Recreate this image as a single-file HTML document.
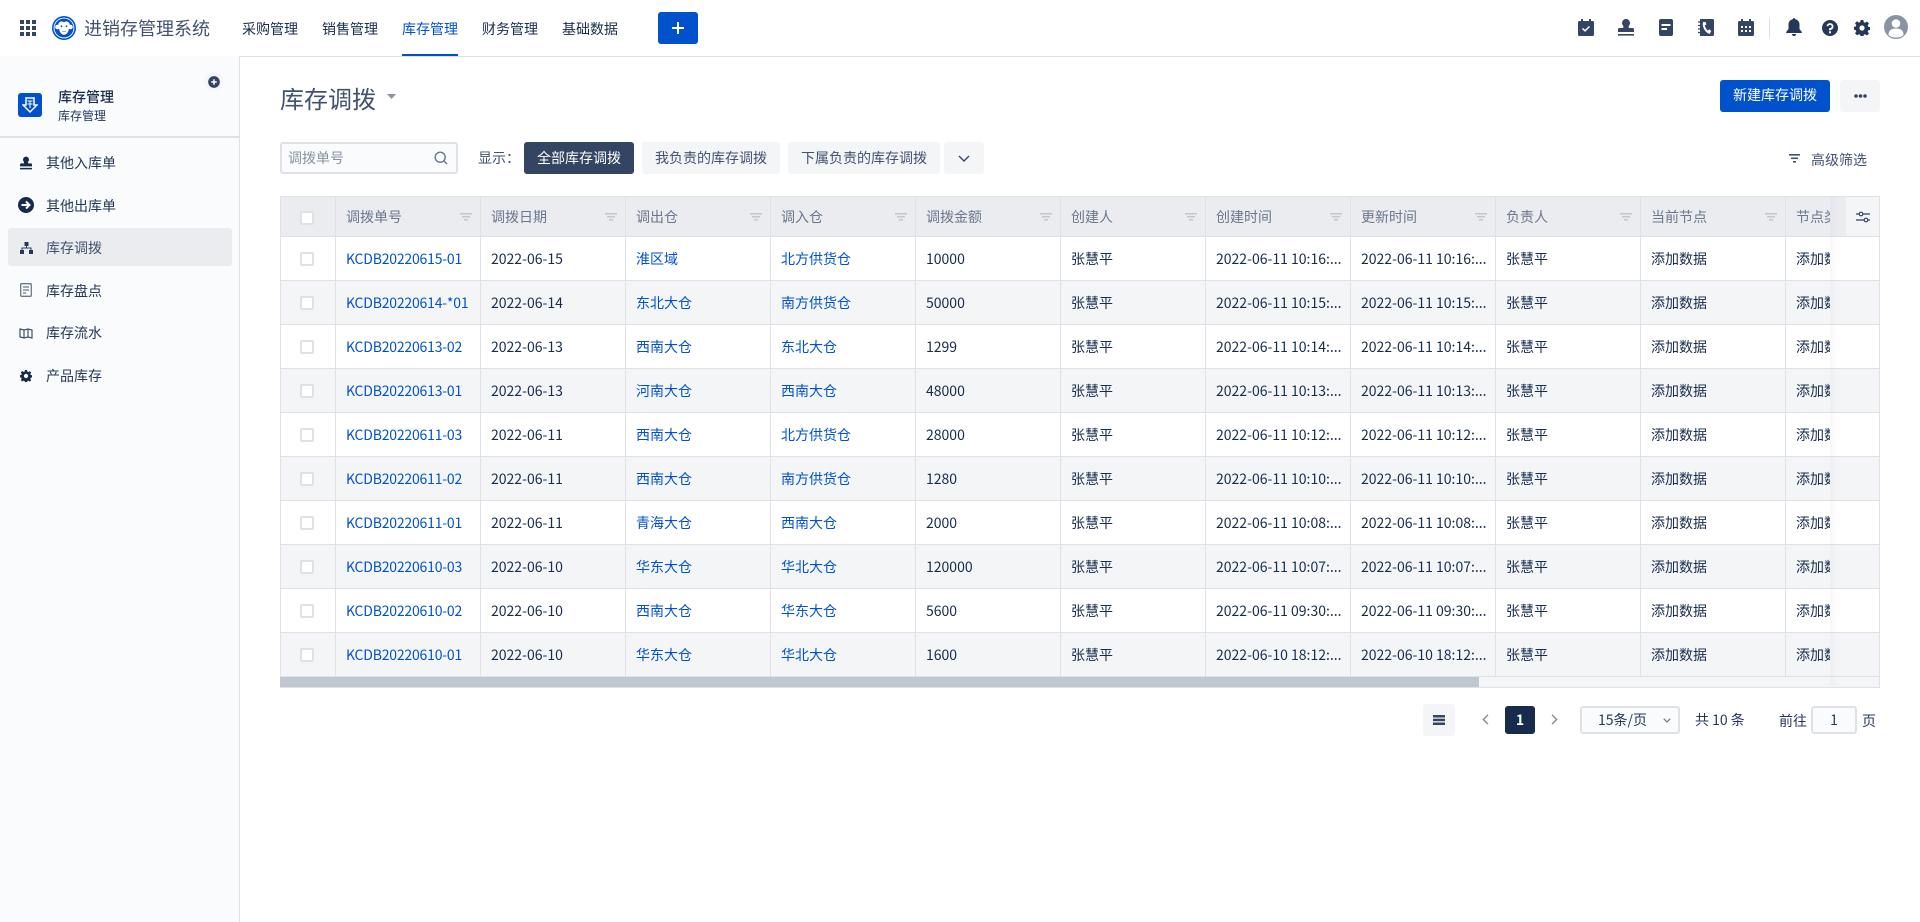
<!DOCTYPE html>
<html lang="zh"><head><meta charset="utf-8"><title>库存调拨</title>
<style>
*{box-sizing:border-box}
html,body{margin:0;padding:0;width:1920px;height:922px;overflow:hidden;background:#fff}
body{font-family:"Noto Sans CJK SC","Liberation Sans",sans-serif;font-size:14px;color:#172b4d;position:relative}
.a{position:absolute;white-space:nowrap}
.t{position:absolute;white-space:nowrap;line-height:20px}
svg{position:absolute;display:block}
.navi{position:absolute;top:19px;line-height:20px;color:#172b4d}
.side{position:absolute;left:0;top:56px;width:240px;height:866px;background:#fafbfc;border-right:1px solid #dfe1e6}
.mi{position:absolute;left:46px;line-height:20px;color:#253858}
.pill{position:absolute;top:142px;height:32px;line-height:33px;text-align:center;border-radius:3px;background:#f4f5f7;color:#42526e}
.tbl{position:absolute;left:280px;top:196px;width:1600px;height:492px;border:1px solid #dfe1e6;border-width:1px 1px 1px 0;border-left:1px solid #dfe1e6;overflow:hidden;background:#f4f5f7}
.r{display:flex;height:44px;background:#fff;border-bottom:1px solid #dfe1e6;width:1600px;margin-left:-1px}
.r.e{background:#f4f5f7}
.r.h{height:40px;background:#ebecf0;color:#6b778c}
.c{width:145px;flex:none;border-left:1px solid #dfe1e6;padding-left:10px;line-height:45px;white-space:nowrap;overflow:hidden;position:relative}
.h .c{line-height:40px}
.c.k{width:55px;padding:0}
.c.l{width:45px}
.c.p{width:50px;border:0}
.k i{position:absolute;left:19px;top:15px;width:14px;height:14px;background:#fff;border:2px solid #dfe1e6;border-radius:2px}
.h .k i{top:14px}
.b{color:#0052cc}
.r:not(.h) .c:nth-child(2){letter-spacing:-.2px}
.f{position:absolute;right:8px;top:16px}
.shade{position:absolute;left:1830px;top:197px;width:8px;height:488px;background:linear-gradient(90deg,rgba(9,30,66,.03),rgba(9,30,66,0))}
.h .f{right:8px}
</style></head><body>

<!-- top bar -->
<div class="a" style="left:0;top:0;width:1920px;height:57px;background:#fff;border-bottom:1px solid #dfe1e6"></div>
<svg style="left:20px;top:20px" width="16" height="16" viewBox="0 0 16 16" fill="#344563"><rect width="4" height="4"/><rect x="6" width="4" height="4"/><rect x="12" width="4" height="4"/><rect y="6" width="4" height="4"/><rect x="6" y="6" width="4" height="4"/><rect x="12" y="6" width="4" height="4"/><rect y="12" width="4" height="4"/><rect x="6" y="12" width="4" height="4"/><rect x="12" y="12" width="4" height="4"/></svg>
<svg style="left:52px;top:16px" width="24" height="24" viewBox="0 0 24 24"><circle cx="12" cy="12" r="12" fill="#0052cc"/><circle cx="12" cy="12" r="10.400" fill="#fff"/><circle cx="12" cy="12" r="9.500" fill="#0052cc"/><circle cx="5.500" cy="11" r="2.300" fill="#fff"/><circle cx="18.500" cy="11" r="2.300" fill="#fff"/><path d="M12 6.300c1.300-1.300 5.300-1.300 5.700 2.200.2 1.900-.9 2.800-.9 4 0 3.200-2.200 6.300-4.800 6.300s-4.800-3.100-4.800-6.300c0-1.200-1.100-2.100-.9-4 .4-3.500 4.400-3.500 5.700-2.200z" fill="#fff"/><circle cx="9.500" cy="10.300" r=".9" fill="#0052cc"/><circle cx="14.500" cy="10.300" r=".9" fill="#0052cc"/><path d="M10 15.500h4" stroke="#7aa5e6" stroke-width=".8"/></svg>
<div class="t" style="left:84px;top:16px;font-size:18px;line-height:24px;color:#42526e">进销存管理系统</div>
<div class="navi" style="left:242px">采购管理</div>
<div class="navi" style="left:322px">销售管理</div>
<div class="navi" style="left:402px;color:#0052cc">库存管理</div>
<div class="navi" style="left:482px">财务管理</div>
<div class="navi" style="left:562px">基础数据</div>
<div class="a" style="left:402px;top:54px;width:56px;height:2px;background:#0052cc"></div>
<div class="a" style="left:658px;top:12px;width:40px;height:32px;background:#0052cc;border-radius:3px"></div>
<svg style="left:671px;top:21px" width="14" height="14" viewBox="0 0 14 14"><path d="M7 1v12M1 7h12" stroke="#fff" stroke-width="2"/></svg>

<!-- right icons -->
<svg style="left:1578px;top:19px" width="16" height="17" viewBox="0 0 16 17"><path d="M3 0h2v2h6V0h2v2h1.500A1.500 1.500 0 0 1 16 3.500v12a1.500 1.500 0 0 1-1.500 1.500h-13A1.500 1.500 0 0 1 0 15.500v-12A1.500 1.500 0 0 1 1.500 2H3z" fill="#344563"/><path d="M4.500 9.500l2.500 2.300 4.500-4.300" fill="none" stroke="#fff" stroke-width="1.500"/></svg>
<svg style="left:1618px;top:19px" width="16" height="17" viewBox="0 0 16 17" fill="#344563"><path d="M8 0a4 4 0 0 1 3 6.600c-.6.800-.5 1.900 0 2.400h3.500A1.500 1.500 0 0 1 16 10.500V13H0v-2.500A1.500 1.500 0 0 1 1.500 9H5c.5-.5.600-1.600 0-2.400A4 4 0 0 1 8 0z"/><rect y="15" width="16" height="1.600"/></svg>
<svg style="left:1659px;top:19px" width="14" height="17" viewBox="0 0 14 17"><rect width="14" height="17" rx="2" fill="#344563"/><path d="M2.500 6h9M2.500 10h5.500" stroke="#fff" stroke-width="2"/></svg>
<svg style="left:1698px;top:19px" width="16" height="17" viewBox="0 0 16 17"><path d="M2 0h12.500A1.500 1.500 0 0 1 16 1.500v14a1.500 1.500 0 0 1-1.500 1.500H2z" fill="#344563"/><path d="M0 3h3M0 6.500h3M0 10h3M0 13.500h3" stroke="#344563" stroke-width="1.200"/><path d="M6.200 3.200c-1.500 3.500 1.500 9.800 6 10.800" fill="none" stroke="#fff" stroke-width="2"/><path d="M5.300 3.500l2.200-.7.900 2.700-2 .8zM9.800 11.500l1.300-1.300 2.200 1.800-1.200 2z" fill="#fff"/></svg>
<svg style="left:1738px;top:19px" width="16" height="17" viewBox="0 0 16 17"><path d="M3 0h2v2h6V0h2v2h1.500A1.500 1.500 0 0 1 16 3.500v12a1.500 1.500 0 0 1-1.500 1.500h-13A1.500 1.500 0 0 1 0 15.500v-12A1.500 1.500 0 0 1 1.500 2H3z" fill="#344563"/><path d="M3 7h2v2H3zM7 7h2v2H7zM11 7h2v2h-2zM3 11h2v2H3zM7 11h2v2H7zM11 11h2v2h-2z" fill="#fff"/></svg>
<div class="a" style="left:1769px;top:18px;width:1px;height:20px;background:#dfe1e6"></div>
<svg style="left:1786px;top:18px" width="16" height="18" viewBox="0 0 16 18"><path d="M8 0a1.500 1.500 0 0 1 1.400 1.300C12 2 13.500 4 13.500 6.500V11l2.300 3v1H.2v-1l2.300-3V6.500C2.500 4 4 2 6.600 1.300A1.500 1.500 0 0 1 8 0z" fill="#253858"/><path d="M5.800 16h4.400a2.200 2 0 0 1-4.400 0z" fill="#253858"/></svg>
<svg style="left:1822px;top:20px" width="16" height="16" viewBox="0 0 16 16"><circle cx="8" cy="8" r="8" fill="#253858"/><path d="M5.400 6.200A2.600 2.500 0 1 1 8 9v1.200" fill="none" stroke="#fff" stroke-width="1.800"/><rect x="7" y="11.300" width="2" height="2" fill="#fff"/></svg>
<svg style="left:1854px;top:20px" width="16" height="16" viewBox="0 0 16 16"><path d="M6.600 0h2.800l.4 2.200 1.300.6L13 1.500l2 2-1.300 1.900.6 1.300 2.200.4v2.800l-2.200.4-.6 1.300 1.300 1.900-2 2-1.900-1.300-1.300.6-.4 2.200H6.600l-.4-2.200-1.300-.6L3 15.300l-2-2 1.300-1.900-.6-1.300L-.5 9.700V6.900l2.200-.4.6-1.300L1 3.300l2-2 1.900 1.300 1.300-.6z" fill="#253858"/><circle cx="8" cy="8" r="2.600" fill="#fff"/></svg>
<svg style="left:1884px;top:15px" width="24" height="24" viewBox="0 0 24 24"><circle cx="12" cy="12" r="12" fill="#8993a4"/><circle cx="12" cy="8.500" r="4.300" fill="#fff"/><path d="M4.500 20c0-4.500 2.500-6.500 7.500-6.500s7.500 2 7.500 6.500c-2 1.600-4.500 2.500-7.500 2.500s-5.500-.9-7.500-2.500z" fill="#fff"/></svg>

<!-- sidebar -->
<div class="side"></div>
<div class="a" style="left:0;top:136px;width:239px;height:2px;background:#dfe1e6"></div>
<div class="a" style="left:204px;top:72px;width:19px;height:19px;border-radius:50%;background:#f4f5f7"></div>
<svg style="left:208px;top:76px" width="12" height="12" viewBox="0 0 13 13"><circle cx="6.500" cy="6.500" r="6.300" fill="#344563"/><path d="M6.500 3.500v6M3.500 6.500h6" stroke="#fff" stroke-width="1.600"/></svg>
<div class="a" style="left:18px;top:93px;width:24px;height:24px;background:#0052cc;border-radius:3px"></div>
<svg style="left:22px;top:96px" width="16" height="18" viewBox="0 0 16 18" fill="none" stroke="#fff" stroke-width="1.500"><path d="M4 9V2h8v7h3l-7 7-7-7z"/><path d="M5.500 5h5M5.500 8h5M8 5v7" stroke-width="1"/></svg>
<div class="t" style="left:58px;top:87px;font-weight:500;color:#172b4d">库存管理</div>
<div class="t" style="left:58px;top:106px;font-size:12px;color:#253858">库存管理</div>
<div class="a" style="left:8px;top:228px;width:224px;height:38px;background:#ebecf0;border-radius:3px"></div>

<svg style="left:20px;top:156px" width="12" height="14" viewBox="0 0 16 17" fill="#172b4d"><path d="M8 0a4 4 0 0 1 3 6.600c-.6.800-.5 1.900 0 2.400h3.500A1.500 1.500 0 0 1 16 10.500V13H0v-2.500A1.500 1.500 0 0 1 1.500 9H5c.5-.5.600-1.600 0-2.400A4 4 0 0 1 8 0z"/><rect y="15" width="16" height="2"/></svg>
<svg style="left:18px;top:197px" width="16" height="16" viewBox="0 0 16 16"><circle cx="8" cy="8" r="8" fill="#172b4d"/><path d="M3.500 8h8M8 4.500L11.500 8 8 11.500" fill="none" stroke="#fff" stroke-width="2"/></svg>
<svg style="left:20px;top:242px" width="13" height="12" viewBox="0 0 13 12" fill="#253858"><rect x="4.500" width="4" height="4"/><rect y="8" width="4" height="4"/><rect x="9" y="8" width="4" height="4"/><path d="M6.500 4v2M2 8V6h9v2" fill="none" stroke="#253858"/></svg>
<svg style="left:20px;top:283px" width="12" height="14" viewBox="0 0 12 14" fill="none" stroke="#6b778c" stroke-width="1.300"><rect x=".7" y=".7" width="10.600" height="12.600" rx="1"/><path d="M3 4h6M3 7h6M3 10h3"/></svg>
<svg style="left:19px;top:327px" width="14" height="12" viewBox="0 0 14 12" fill="none" stroke="#42526e" stroke-width="1.200"><path d="M1 2l4 1 4-1 4 1v8l-4-1-4 1-4-1zM5 3v8M9 2v8"/></svg>
<svg style="left:20px;top:370px" width="12" height="12" viewBox="0 0 16 16"><path d="M6.600 0h2.800l.4 2.200 1.300.6L13 1.500l2 2-1.300 1.900.6 1.300 2.200.4v2.800l-2.200.4-.6 1.300 1.300 1.900-2 2-1.900-1.300-1.300.6-.4 2.200H6.600l-.4-2.200-1.300-.6L3 15.300l-2-2 1.300-1.900-.6-1.300L-.5 9.700V6.900l2.200-.4.6-1.300L1 3.300l2-2 1.900 1.300 1.300-.6z" fill="#172b4d"/><circle cx="8" cy="8" r="2.800" fill="#fff"/></svg>
<div class="mi" style="top:153px">其他入库单</div>
<div class="mi" style="top:196px">其他出库单</div>
<div class="mi" style="top:238px;color:#42526e">库存调拨</div>
<div class="mi" style="top:281px">库存盘点</div>
<div class="mi" style="top:323px">库存流水</div>
<div class="mi" style="top:366px">产品库存</div>

<!-- page head -->
<div class="t" style="left:280px;top:82px;font-size:24px;line-height:32px;color:#42526e">库存调拨</div>
<svg style="left:387px;top:94px" width="9" height="5" viewBox="0 0 9 5"><path d="M0 0h9L4.500 5z" fill="#8993a4"/></svg>
<div class="a" style="left:1720px;top:80px;width:110px;height:32px;background:#0052cc;border-radius:3px;color:#fff;text-align:center;line-height:31px">新建库存调拨</div>
<div class="a" style="left:1840px;top:80px;width:40px;height:32px;background:#f4f5f7;border-radius:3px"></div>
<svg style="left:1854px;top:94px" width="13" height="4" viewBox="0 0 13 4" fill="#344563"><circle cx="2" cy="2" r="1.800"/><circle cx="6.500" cy="2" r="1.800"/><circle cx="11" cy="2" r="1.800"/></svg>

<!-- filters -->
<div class="a" style="left:280px;top:142px;width:178px;height:32px;background:#fafbfc;border:2px solid #dfe1e6;border-radius:3px"></div>
<div class="t" style="left:288px;top:148px;color:#8993a4">调拨单号</div>
<svg style="left:434px;top:151px" width="14" height="14" viewBox="0 0 14 14" fill="none" stroke="#6b778c" stroke-width="1.400"><circle cx="6.200" cy="6.200" r="5"/><path d="M9.800 9.800L13 13"/></svg>
<div class="t" style="left:478px;top:148px;color:#42526e">显示：</div>
<div class="pill" style="left:524px;width:110px;background:#344563;color:#fff">全部库存调拨</div>
<div class="pill" style="left:642px;width:138px">我负责的库存调拨</div>
<div class="pill" style="left:788px;width:152px">下属负责的库存调拨</div>
<div class="pill" style="left:944px;width:40px"></div>
<svg style="left:958px;top:155px" width="12" height="7" viewBox="0 0 12 7"><path d="M1 1l5 5 5-5" fill="none" stroke="#344563" stroke-width="1.400"/></svg>
<svg style="left:1789px;top:154px" width="11" height="9" viewBox="0 0 11 9" fill="#42526e"><rect width="11" height="1.600"/><rect x="2" y="3.500" width="7" height="1.600"/><rect x="4" y="7" width="3" height="1.600"/></svg>
<div class="t" style="left:1811px;top:150px;color:#42526e">高级筛选</div>

<!-- table -->
<div class="tbl">
<div class="r h">
<div class="c k"><i></i></div>
<div class="c">调拨单号<svg class="f" width="12" height="8" viewBox="0 0 12 8" fill="#c1c7d0"><rect width="12" height="1.500"/><rect x="2" y="3" width="8" height="1.500"/><rect x="4" y="6" width="4" height="1.500"/></svg></div>
<div class="c">调拨日期<svg class="f" width="12" height="8" viewBox="0 0 12 8" fill="#c1c7d0"><rect width="12" height="1.500"/><rect x="2" y="3" width="8" height="1.500"/><rect x="4" y="6" width="4" height="1.500"/></svg></div>
<div class="c">调出仓<svg class="f" width="12" height="8" viewBox="0 0 12 8" fill="#c1c7d0"><rect width="12" height="1.500"/><rect x="2" y="3" width="8" height="1.500"/><rect x="4" y="6" width="4" height="1.500"/></svg></div>
<div class="c">调入仓<svg class="f" width="12" height="8" viewBox="0 0 12 8" fill="#c1c7d0"><rect width="12" height="1.500"/><rect x="2" y="3" width="8" height="1.500"/><rect x="4" y="6" width="4" height="1.500"/></svg></div>
<div class="c">调拨金额<svg class="f" width="12" height="8" viewBox="0 0 12 8" fill="#c1c7d0"><rect width="12" height="1.500"/><rect x="2" y="3" width="8" height="1.500"/><rect x="4" y="6" width="4" height="1.500"/></svg></div>
<div class="c">创建人<svg class="f" width="12" height="8" viewBox="0 0 12 8" fill="#c1c7d0"><rect width="12" height="1.500"/><rect x="2" y="3" width="8" height="1.500"/><rect x="4" y="6" width="4" height="1.500"/></svg></div>
<div class="c">创建时间<svg class="f" width="12" height="8" viewBox="0 0 12 8" fill="#c1c7d0"><rect width="12" height="1.500"/><rect x="2" y="3" width="8" height="1.500"/><rect x="4" y="6" width="4" height="1.500"/></svg></div>
<div class="c">更新时间<svg class="f" width="12" height="8" viewBox="0 0 12 8" fill="#c1c7d0"><rect width="12" height="1.500"/><rect x="2" y="3" width="8" height="1.500"/><rect x="4" y="6" width="4" height="1.500"/></svg></div>
<div class="c">负责人<svg class="f" width="12" height="8" viewBox="0 0 12 8" fill="#c1c7d0"><rect width="12" height="1.500"/><rect x="2" y="3" width="8" height="1.500"/><rect x="4" y="6" width="4" height="1.500"/></svg></div>
<div class="c">当前节点<svg class="f" width="12" height="8" viewBox="0 0 12 8" fill="#c1c7d0"><rect width="12" height="1.500"/><rect x="2" y="3" width="8" height="1.500"/><rect x="4" y="6" width="4" height="1.500"/></svg></div>
<div class="c l">节点类型</div>
<div class="c p"></div>
</div>
<div class="r"><div class="c k"><i></i></div><div class="c b">KCDB20220615-01</div><div class="c">2022-06-15</div><div class="c b">淮区域</div><div class="c b">北方供货仓</div><div class="c">10000</div><div class="c">张慧平</div><div class="c">2022-06-11 10:16:...</div><div class="c">2022-06-11 10:16:...</div><div class="c">张慧平</div><div class="c">添加数据</div><div class="c l">添加数据</div><div class="c p"></div></div>
<div class="r e"><div class="c k"><i></i></div><div class="c b">KCDB20220614-*01</div><div class="c">2022-06-14</div><div class="c b">东北大仓</div><div class="c b">南方供货仓</div><div class="c">50000</div><div class="c">张慧平</div><div class="c">2022-06-11 10:15:...</div><div class="c">2022-06-11 10:15:...</div><div class="c">张慧平</div><div class="c">添加数据</div><div class="c l">添加数据</div><div class="c p"></div></div>
<div class="r"><div class="c k"><i></i></div><div class="c b">KCDB20220613-02</div><div class="c">2022-06-13</div><div class="c b">西南大仓</div><div class="c b">东北大仓</div><div class="c">1299</div><div class="c">张慧平</div><div class="c">2022-06-11 10:14:...</div><div class="c">2022-06-11 10:14:...</div><div class="c">张慧平</div><div class="c">添加数据</div><div class="c l">添加数据</div><div class="c p"></div></div>
<div class="r e"><div class="c k"><i></i></div><div class="c b">KCDB20220613-01</div><div class="c">2022-06-13</div><div class="c b">河南大仓</div><div class="c b">西南大仓</div><div class="c">48000</div><div class="c">张慧平</div><div class="c">2022-06-11 10:13:...</div><div class="c">2022-06-11 10:13:...</div><div class="c">张慧平</div><div class="c">添加数据</div><div class="c l">添加数据</div><div class="c p"></div></div>
<div class="r"><div class="c k"><i></i></div><div class="c b">KCDB20220611-03</div><div class="c">2022-06-11</div><div class="c b">西南大仓</div><div class="c b">北方供货仓</div><div class="c">28000</div><div class="c">张慧平</div><div class="c">2022-06-11 10:12:...</div><div class="c">2022-06-11 10:12:...</div><div class="c">张慧平</div><div class="c">添加数据</div><div class="c l">添加数据</div><div class="c p"></div></div>
<div class="r e"><div class="c k"><i></i></div><div class="c b">KCDB20220611-02</div><div class="c">2022-06-11</div><div class="c b">西南大仓</div><div class="c b">南方供货仓</div><div class="c">1280</div><div class="c">张慧平</div><div class="c">2022-06-11 10:10:...</div><div class="c">2022-06-11 10:10:...</div><div class="c">张慧平</div><div class="c">添加数据</div><div class="c l">添加数据</div><div class="c p"></div></div>
<div class="r"><div class="c k"><i></i></div><div class="c b">KCDB20220611-01</div><div class="c">2022-06-11</div><div class="c b">青海大仓</div><div class="c b">西南大仓</div><div class="c">2000</div><div class="c">张慧平</div><div class="c">2022-06-11 10:08:...</div><div class="c">2022-06-11 10:08:...</div><div class="c">张慧平</div><div class="c">添加数据</div><div class="c l">添加数据</div><div class="c p"></div></div>
<div class="r e"><div class="c k"><i></i></div><div class="c b">KCDB20220610-03</div><div class="c">2022-06-10</div><div class="c b">华东大仓</div><div class="c b">华北大仓</div><div class="c">120000</div><div class="c">张慧平</div><div class="c">2022-06-11 10:07:...</div><div class="c">2022-06-11 10:07:...</div><div class="c">张慧平</div><div class="c">添加数据</div><div class="c l">添加数据</div><div class="c p"></div></div>
<div class="r"><div class="c k"><i></i></div><div class="c b">KCDB20220610-02</div><div class="c">2022-06-10</div><div class="c b">西南大仓</div><div class="c b">华东大仓</div><div class="c">5600</div><div class="c">张慧平</div><div class="c">2022-06-11 09:30:...</div><div class="c">2022-06-11 09:30:...</div><div class="c">张慧平</div><div class="c">添加数据</div><div class="c l">添加数据</div><div class="c p"></div></div>
<div class="r e"><div class="c k"><i></i></div><div class="c b">KCDB20220610-01</div><div class="c">2022-06-10</div><div class="c b">华东大仓</div><div class="c b">华北大仓</div><div class="c">1600</div><div class="c">张慧平</div><div class="c">2022-06-10 18:12:...</div><div class="c">2022-06-10 18:12:...</div><div class="c">张慧平</div><div class="c">添加数据</div><div class="c l">添加数据</div><div class="c p"></div></div>
</div>
<div class="a" style="left:280px;top:677px;width:1199px;height:10px;background:#c1c7d0"></div>
<div class="shade"></div>
<div class="a" style="left:1846px;top:197px;width:33px;height:39px;background:#f4f5f7;border-radius:0 0 0 3px"></div>
<svg style="left:1856px;top:211px" width="14" height="12" viewBox="0 0 14 12" fill="none" stroke="#344563" stroke-width="1.200"><path d="M0 3h3M7 3h7M0 9h8M12 9h2"/><circle cx="5" cy="3" r="1.800"/><circle cx="10" cy="9" r="1.800"/></svg>

<!-- pagination -->
<div class="a" style="left:1423px;top:704px;width:32px;height:32px;background:#f4f5f7;border-radius:3px"></div>
<svg style="left:1433px;top:715px" width="12" height="10" viewBox="0 0 12 10" fill="#344563"><rect width="12" height="2.500"/><rect y="3.700" width="12" height="2.500"/><rect y="7.500" width="12" height="2.500"/></svg>
<svg style="left:1482px;top:714px" width="7" height="11" viewBox="0 0 7 11"><path d="M6 .8L1.300 5.500 6 10.200" fill="none" stroke="#7a869a" stroke-width="1.300"/></svg>
<div class="a" style="left:1505px;top:706px;width:30px;height:28px;background:#172b4d;border-radius:3px;color:#fff;text-align:center;line-height:28px;font-weight:700">1</div>
<svg style="left:1551px;top:714px" width="7" height="11" viewBox="0 0 7 11"><path d="M1 .8l4.700 4.700L1 10.200" fill="none" stroke="#7a869a" stroke-width="1.300"/></svg>
<div class="a" style="left:1580px;top:706px;width:100px;height:28px;background:#fafbfc;border:2px solid #dfe1e6;border-radius:3px"></div>
<div class="t" style="left:1598px;top:710px;color:#253858">15条/页</div>
<svg style="left:1663px;top:718px" width="8" height="5" viewBox="0 0 8 5"><path d="M.7.7L4 4 7.300.7" fill="none" stroke="#6b778c" stroke-width="1.200"/></svg>
<div class="t" style="left:1695px;top:710px;color:#253858">共 10 条</div>
<div class="t" style="left:1779px;top:711px;color:#253858">前往</div>
<div class="a" style="left:1811px;top:706px;width:46px;height:28px;background:#fafbfc;border:2px solid #dfe1e6;border-radius:3px;text-align:center;line-height:25px;color:#253858">1</div>
<div class="t" style="left:1862px;top:711px;color:#253858">页</div>
</body></html>
